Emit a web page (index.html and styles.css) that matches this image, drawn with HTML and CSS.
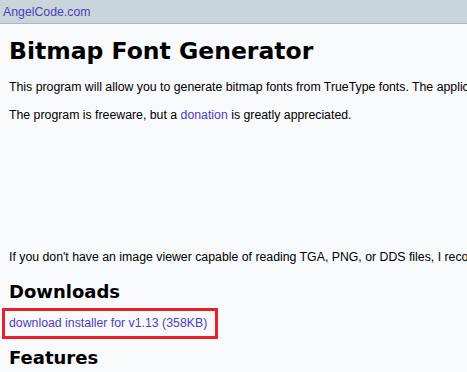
FILE: index.html
```html
<!DOCTYPE html>
<html>
<head>
<meta charset="utf-8">
<link rel="stylesheet" href="styles.css">
</head>
<body>
<div class="topbar"><a class="site" href="#">AngelCode.com</a></div>
<div class="content">
  <h1 class="title">Bitmap Font Generator</h1>
  <p class="text">This program will allow you to generate bitmap fonts from TrueType fonts. The application generates both image files and character descriptions.</p>
  <p class="text">The program is freeware, but a <a class="link" href="#">donation</a> is greatly appreciated.</p>
  <div class="preview"></div>
  <p class="text">If you don't have an image viewer capable of reading TGA, PNG, or DDS files, I recommend using an external viewer.</p>
  <h2 class="section">Downloads</h2>
  <div class="highlight"><a class="link" href="#">download installer for v1.13 (358KB)</a></div>
  <h2 class="section section-after-box">Features</h2>
</div>
</body>
</html>
```

FILE: styles.css
```css
html, body {
  margin: 0;
  padding: 0;
  background: #f8f9fb;
  overflow: hidden;
}
body {
  font-family: "Liberation Sans", Arial, sans-serif;
  font-size: 12.3px;
  color: #000;
}
.topbar {
  height: 23px;
  background: #c8d6dc;
  border-bottom: 1px solid #a9b5cd;
  padding-left: 3px;
  line-height: 24px;
}
.site {
  color: #4d3fb8;
  text-decoration: none;
  font-size: 12.3px;
}
.content {
  padding-left: 9px;
  white-space: nowrap;
}
.title {
  font-family: "DejaVu Sans", Verdana, sans-serif;
  font-weight: bold;
  font-size: 23.5px;
  margin: 12px 0 0 0;
  line-height: 30px;
}
.text {
  margin: 14px 0 0 0;
  line-height: 14px;
}
.link {
  color: #4d3fb8;
  text-decoration: none;
}
.preview {
  height: 114px;
}
.section {
  font-family: "DejaVu Sans", Verdana, sans-serif;
  font-weight: bold;
  font-size: 18px;
  margin: 17px 0 0 0;
  line-height: 22px;
}
.section-after-box {
  margin-top: 8px;
}
.highlight {
  margin: 5px 0 0 -7px;
  width: 202px;
  border: 3px solid #e8202a;
  padding: 6px 4px;
  line-height: 13px;
}
```
